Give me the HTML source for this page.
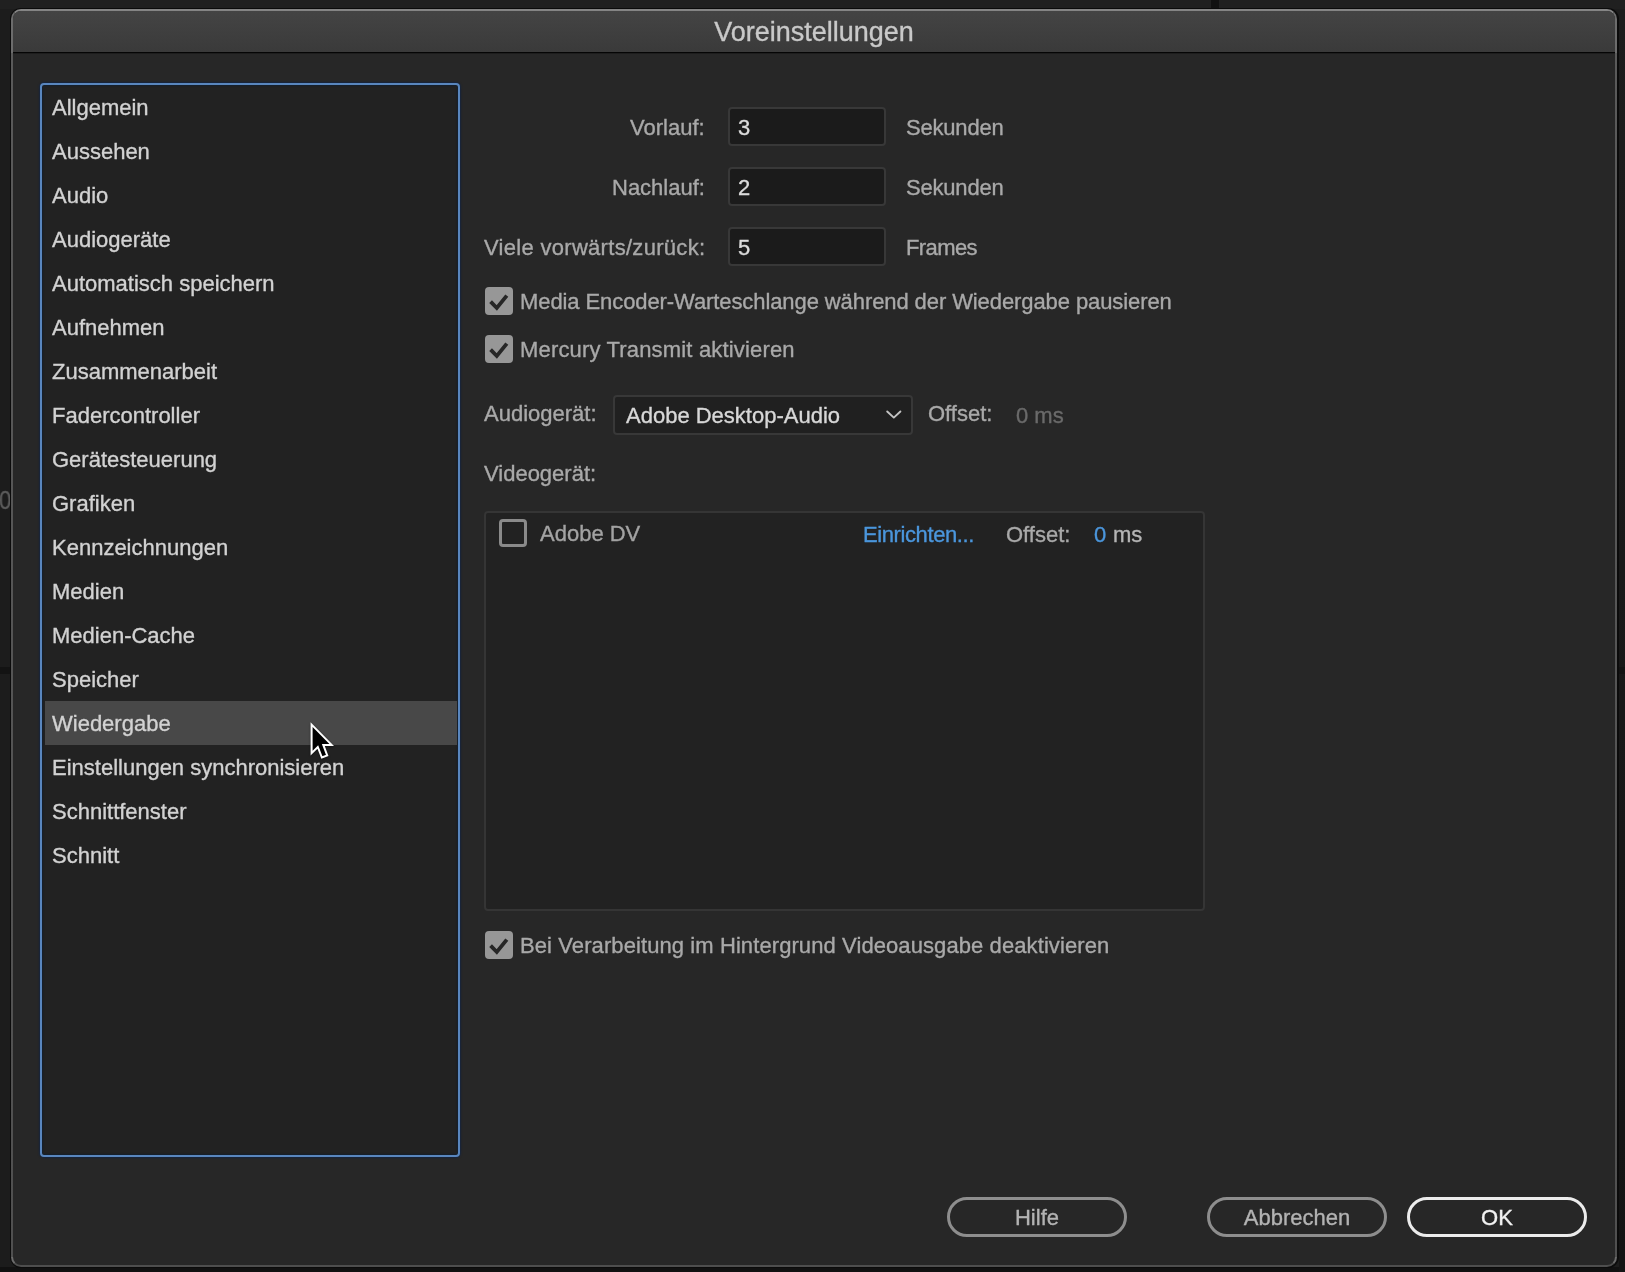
<!DOCTYPE html>
<html><head><meta charset="utf-8"><style>
*{margin:0;padding:0;box-sizing:border-box}
html,body{width:1625px;height:1272px;overflow:hidden;background:#1c1c1c;font-family:"Liberation Sans",sans-serif}
.t{position:absolute;white-space:pre;will-change:transform;-webkit-text-stroke:0.35px currentColor}
.a{position:absolute}
</style></head><body>
<div class="a" style="left:0;top:0;width:1625px;height:9px;background:#202020"></div>
<div class="a" style="left:1211px;top:0;width:8px;height:9px;background:#111"></div>
<div class="a" style="left:0;top:1267px;width:1625px;height:5px;background:#111"></div>
<div class="a" style="left:1619px;top:9px;width:6px;height:1263px;background:linear-gradient(#1d1d1d,#141414)"></div>
<div class="a" style="left:0;top:667px;width:1625px;height:7px;background:#131313"></div>
<div class="t" style="top:487.49px;font-size:26px;line-height:26px;color:#5c5c5c;left:-1.50px;transform:scaleX(0.85);transform-origin:0 0;">0</div>

<div class="a" style="left:10px;top:8px;width:1609px;height:1260px;background:#0b0b0b;border-radius:11px"></div>
<div class="a" style="left:11px;top:9px;width:1606px;height:1258px;background:#272727;border:2px solid #6c6c6c;border-top-color:#858585;border-bottom-color:#4e4e4e;border-radius:10px;overflow:hidden"><div class="a" style="left:0;top:0;width:100%;height:41px;background:linear-gradient(#444,#3a3a3a)"></div><div class="a" style="left:0;top:41px;width:100%;height:1px;background:#050505"></div><div class="a" style="left:0;top:42px;width:100%;height:1px;background:#1d1d1d"></div></div>
<div class="a" style="left:11px;top:53px;width:2px;height:1204px;background:linear-gradient(#5a5a5a,#505050)"></div><div class="a" style="left:1615px;top:53px;width:2px;height:1204px;background:linear-gradient(#5a5a5a,#505050)"></div>
<div class="t" style="top:19.04px;font-size:27px;line-height:27px;color:#c9c9c9;left:514px;width:600px;text-align:center;">Voreinstellungen</div>

<div class="a" style="left:40px;top:83px;width:420px;height:1074px;background:#222222;border:2px solid #5986be;border-radius:4px;box-shadow:0 0 1.5px 1px rgba(10,35,80,0.55), inset 0 0 1.5px 1px rgba(5,30,55,0.5)"></div>
<div class="t" style="top:96.98px;font-size:22px;line-height:22px;color:#d2d2d2;left:51.90px;">Allgemein</div>

<div class="t" style="top:140.98px;font-size:22px;line-height:22px;color:#d2d2d2;left:51.90px;">Aussehen</div>

<div class="t" style="top:184.98px;font-size:22px;line-height:22px;color:#d2d2d2;left:51.90px;">Audio</div>

<div class="t" style="top:228.98px;font-size:22px;line-height:22px;color:#d2d2d2;left:51.90px;">Audiogeräte</div>

<div class="t" style="top:272.98px;font-size:22px;line-height:22px;color:#d2d2d2;left:51.90px;">Automatisch speichern</div>

<div class="t" style="top:316.98px;font-size:22px;line-height:22px;color:#d2d2d2;left:51.90px;">Aufnehmen</div>

<div class="t" style="top:360.98px;font-size:22px;line-height:22px;color:#d2d2d2;left:51.90px;">Zusammenarbeit</div>

<div class="t" style="top:404.98px;font-size:22px;line-height:22px;color:#d2d2d2;left:51.90px;">Fadercontroller</div>

<div class="t" style="top:448.98px;font-size:22px;line-height:22px;color:#d2d2d2;left:51.90px;">Gerätesteuerung</div>

<div class="t" style="top:492.98px;font-size:22px;line-height:22px;color:#d2d2d2;left:51.90px;">Grafiken</div>

<div class="t" style="top:536.98px;font-size:22px;line-height:22px;color:#d2d2d2;left:51.90px;">Kennzeichnungen</div>

<div class="t" style="top:580.98px;font-size:22px;line-height:22px;color:#d2d2d2;left:51.90px;">Medien</div>

<div class="t" style="top:624.98px;font-size:22px;line-height:22px;color:#d2d2d2;left:51.90px;">Medien-Cache</div>

<div class="t" style="top:668.98px;font-size:22px;line-height:22px;color:#d2d2d2;left:51.90px;">Speicher</div>

<div class="a" style="left:45px;top:701px;width:412px;height:44px;background:#484848"></div>
<div class="t" style="top:712.98px;font-size:22px;line-height:22px;color:#d2d2d2;left:51.90px;">Wiedergabe</div>

<div class="t" style="top:756.98px;font-size:22px;line-height:22px;color:#d2d2d2;left:51.90px;">Einstellungen synchronisieren</div>

<div class="t" style="top:800.98px;font-size:22px;line-height:22px;color:#d2d2d2;left:51.90px;">Schnittfenster</div>

<div class="t" style="top:844.98px;font-size:22px;line-height:22px;color:#d2d2d2;left:51.90px;">Schnitt</div>

<div class="t" style="top:117.18px;font-size:22px;line-height:22px;color:#a9a9a9;right:920px;text-align:right;">Vorlauf:</div>

<div class="a" style="left:728px;top:107px;width:158px;height:39px;background:#1b1b1b;border:2px solid #383838;border-radius:4px"></div>
<div class="t" style="top:117.18px;font-size:22px;line-height:22px;color:#dcdcdc;left:738.40px;">3</div>

<div class="t" style="top:117.18px;font-size:22px;line-height:22px;color:#a9a9a9;left:906.40px;letter-spacing:-0.2px;">Sekunden</div>

<div class="t" style="top:177.18px;font-size:22px;line-height:22px;color:#a9a9a9;right:920px;text-align:right;">Nachlauf:</div>

<div class="a" style="left:728px;top:167px;width:158px;height:39px;background:#1b1b1b;border:2px solid #383838;border-radius:4px"></div>
<div class="t" style="top:177.18px;font-size:22px;line-height:22px;color:#dcdcdc;left:738.40px;">2</div>

<div class="t" style="top:177.18px;font-size:22px;line-height:22px;color:#a9a9a9;left:906.40px;letter-spacing:-0.2px;">Sekunden</div>

<div class="t" style="top:237.18px;font-size:22px;line-height:22px;color:#a9a9a9;right:919.7px;text-align:right;letter-spacing:0.3px;">Viele vorwärts/zurück:</div>

<div class="a" style="left:728px;top:227px;width:158px;height:39px;background:#1b1b1b;border:2px solid #383838;border-radius:4px"></div>
<div class="t" style="top:237.18px;font-size:22px;line-height:22px;color:#dcdcdc;left:738.40px;">5</div>

<div class="t" style="top:237.18px;font-size:22px;line-height:22px;color:#a9a9a9;left:906.40px;letter-spacing:-0.6px;">Frames</div>

<div class="a" style="left:485px;top:287px;width:28px;height:28px;background:#979797;border-radius:4px"><svg class="a" style="left:0;top:0" width="28" height="28" viewBox="0 0 28 28"><path d="M5.6 14.6 L11.8 21 L21.8 8.6" fill="none" stroke="#262626" stroke-width="3.8" stroke-linecap="butt" stroke-linejoin="miter"/></svg></div>
<div class="t" style="top:291.18px;font-size:22px;line-height:22px;color:#a9a9a9;left:519.70px;letter-spacing:-0.09px;">Media Encoder-Warteschlange während der Wiedergabe pausieren</div>

<div class="a" style="left:485px;top:335px;width:28px;height:28px;background:#979797;border-radius:4px"><svg class="a" style="left:0;top:0" width="28" height="28" viewBox="0 0 28 28"><path d="M5.6 14.6 L11.8 21 L21.8 8.6" fill="none" stroke="#262626" stroke-width="3.8" stroke-linecap="butt" stroke-linejoin="miter"/></svg></div>
<div class="t" style="top:339.18px;font-size:22px;line-height:22px;color:#a9a9a9;left:519.70px;letter-spacing:0.17px;">Mercury Transmit aktivieren</div>

<div class="t" style="top:402.78px;font-size:22px;line-height:22px;color:#a9a9a9;left:484.40px;">Audiogerät:</div>

<div class="a" style="left:613px;top:395px;width:300px;height:40px;background:#202020;border:2px solid #383838;border-radius:4px"></div>
<div class="t" style="top:404.58px;font-size:22px;line-height:22px;color:#d8d8d8;left:626.40px;">Adobe Desktop-Audio</div>

<svg class="a" style="left:884px;top:407px" width="20" height="15" viewBox="0 0 20 15"><path d="M3.2 4.5 L9.8 10.6 L16.4 4.5" fill="none" stroke="#c4c4c4" stroke-width="1.9" stroke-linecap="round" stroke-linejoin="round"/></svg>
<div class="t" style="top:403.18px;font-size:22px;line-height:22px;color:#a9a9a9;left:928.40px;">Offset:</div>

<div class="t" style="top:404.68px;font-size:22px;line-height:22px;color:#6a6a6a;left:1016.40px;">0 ms</div>

<div class="t" style="top:462.68px;font-size:22px;line-height:22px;color:#a9a9a9;left:484.40px;">Videogerät:</div>

<div class="a" style="left:484px;top:511px;width:721px;height:400px;background:#222222;border:2px solid #353535;border-radius:4px"></div>
<div class="a" style="left:499px;top:519px;width:28px;height:28px;border:3px solid #8a8a8a;border-radius:4px"></div>
<div class="t" style="top:522.98px;font-size:22px;line-height:22px;color:#a3a3a3;left:540.10px;">Adobe DV</div>

<div class="t" style="top:523.58px;font-size:22px;line-height:22px;color:#4b96dc;left:863.20px;letter-spacing:-0.4px;">Einrichten...</div>

<div class="t" style="top:523.58px;font-size:22px;line-height:22px;color:#a9a9a9;left:1006.40px;">Offset:</div>

<div class="t" style="top:523.58px;font-size:22px;line-height:22px;color:#4b96dc;left:1094.00px;">0</div>

<div class="t" style="top:523.58px;font-size:22px;line-height:22px;color:#b5b5b5;left:1113.00px;">ms</div>

<div class="a" style="left:485px;top:931px;width:28px;height:28px;background:#979797;border-radius:4px"><svg class="a" style="left:0;top:0" width="28" height="28" viewBox="0 0 28 28"><path d="M5.6 14.6 L11.8 21 L21.8 8.6" fill="none" stroke="#262626" stroke-width="3.8" stroke-linecap="butt" stroke-linejoin="miter"/></svg></div>
<div class="t" style="top:935.18px;font-size:22px;line-height:22px;color:#a9a9a9;left:519.70px;letter-spacing:0.09px;">Bei Verarbeitung im Hintergrund Videoausgabe deaktivieren</div>

<div class="a" style="left:947px;top:1197px;width:180px;height:40px;border:3px solid #8e8e8e;border-radius:20px"></div><div class="t" style="top:1207.18px;font-size:22px;line-height:22px;color:#b3b3b3;left:737px;width:600px;text-align:center;">Hilfe</div>

<div class="a" style="left:1207px;top:1197px;width:180px;height:40px;border:3px solid #8e8e8e;border-radius:20px"></div><div class="t" style="top:1207.18px;font-size:22px;line-height:22px;color:#b3b3b3;left:997px;width:600px;text-align:center;">Abbrechen</div>

<div class="a" style="left:1407px;top:1197px;width:180px;height:40px;border:3px solid #ececec;border-radius:20px"></div><div class="t" style="top:1207.18px;font-size:22px;line-height:22px;color:#f2f2f2;left:1197px;width:600px;text-align:center;">OK</div>

<svg class="a" style="left:305px;top:718px;filter:drop-shadow(0.5px 1px 1px rgba(0,0,0,0.45))" width="36" height="46" viewBox="305 718 36 46"><path d="M311.6 724.6 L311.6 753.2 L317.8 747.0 L321.9 757.5 L327.2 755.4 L323.3 744.9 L331.6 744.9 Z" fill="#000" stroke="#fff" stroke-width="2" stroke-linejoin="miter"/></svg>
</body></html>
